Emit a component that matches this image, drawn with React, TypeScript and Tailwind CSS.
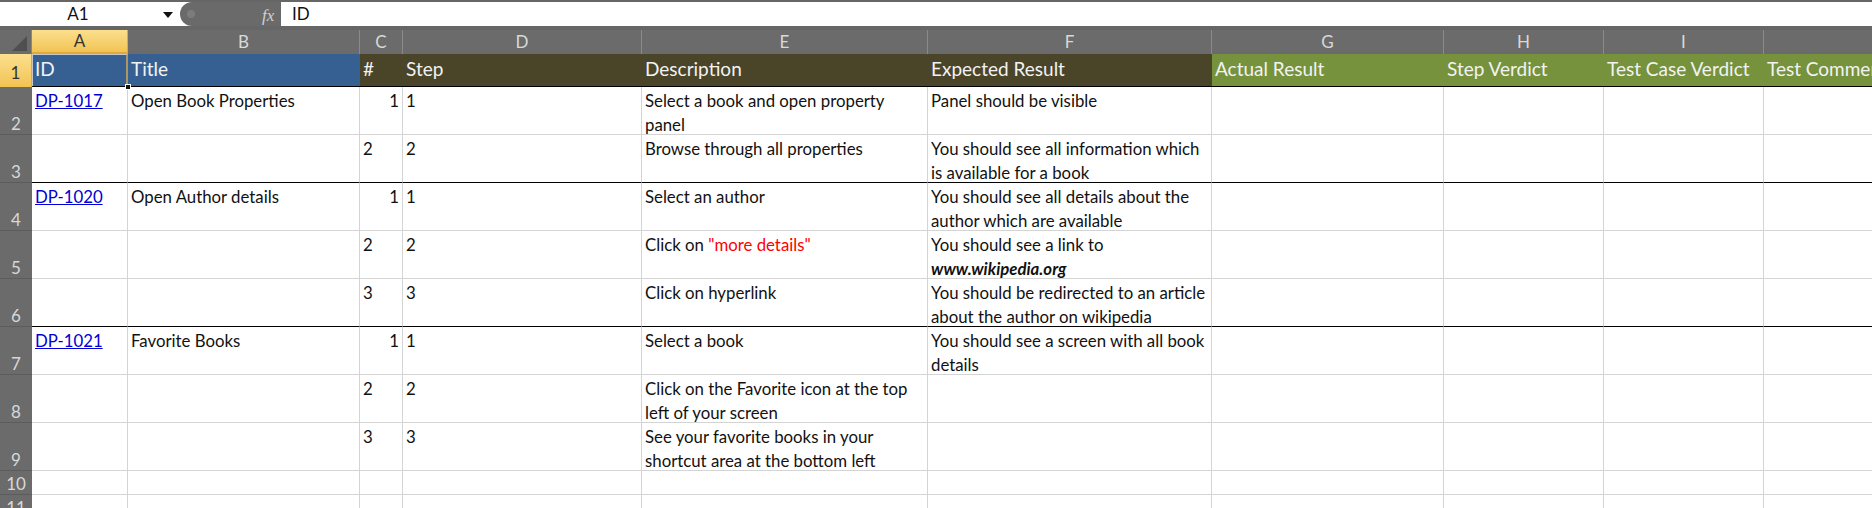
import React from 'react';

type Cell = React.ReactNode;

interface Row {
  a?: string;
  b?: string;
  c?: string;
  cNum?: boolean;
  d?: string;
  e?: Cell[];
  f?: Cell[];
  sep?: boolean;
  h: string;
}

const font = { fontFamily: 'Lato, "Liberation Sans", sans-serif' };

const rows: Row[] = [
  {
    a: 'DP-1017',
    b: 'Open Book Properties',
    c: '1',
    cNum: true,
    d: '1',
    e: ['Select a book and open property', 'panel'],
    f: ['Panel should be visible'],
    h: 'h-[48px]',
  },
  {
    c: '2',
    d: '2',
    e: ['Browse through all properties'],
    f: ['You should see all information which', 'is available for a book'],
    sep: true,
    h: 'h-[48px]',
  },
  {
    a: 'DP-1020',
    b: 'Open Author details',
    c: '1',
    cNum: true,
    d: '1',
    e: ['Select an author'],
    f: ['You should see all details about the', 'author which are available'],
    h: 'h-[48px]',
  },
  {
    c: '2',
    d: '2',
    e: [
      <>
        Click on <span className="text-[#ff0000]">"more details"</span>
      </>,
    ],
    f: ['You should see a link to', <span className="font-bold italic">www.wikipedia.org</span>],
    h: 'h-[48px]',
  },
  {
    c: '3',
    d: '3',
    e: ['Click on hyperlink'],
    f: ['You should be redirected to an article', 'about the author on wikipedia'],
    sep: true,
    h: 'h-[48px]',
  },
  {
    a: 'DP-1021',
    b: 'Favorite Books',
    c: '1',
    cNum: true,
    d: '1',
    e: ['Select a book'],
    f: ['You should see a screen with all book', 'details'],
    h: 'h-[48px]',
  },
  {
    c: '2',
    d: '2',
    e: ['Click on the Favorite icon at the top', 'left of your screen'],
    h: 'h-[48px]',
  },
  {
    c: '3',
    d: '3',
    e: ['See your favorite books in your', 'shortcut area at the bottom left'],
    h: 'h-[48px]',
  },
  { h: 'h-[24px]' },
  { h: 'h-[24px]' },
];

// J is wider than the window, so its letter sits off-screen like in Excel
const columns = [
  { key: 'A', w: 'w-[96px]' },
  { key: 'B', w: 'w-[232px]' },
  { key: 'C', w: 'w-[43px]' },
  { key: 'D', w: 'w-[239px]' },
  { key: 'E', w: 'w-[286px]' },
  { key: 'F', w: 'w-[284px]' },
  { key: 'G', w: 'w-[232px]' },
  { key: 'H', w: 'w-[160px]' },
  { key: 'I', w: 'w-[160px]' },
  { key: 'J', w: 'w-[500px]' },
];

const headers = [
  { text: 'ID', bg: 'bg-[#376092]' },
  { text: 'Title', bg: 'bg-[#376092]' },
  { text: '#', bg: 'bg-[#4a4429]' },
  { text: 'Step', bg: 'bg-[#4a4429]' },
  { text: 'Description', bg: 'bg-[#4a4429]' },
  { text: 'Expected Result', bg: 'bg-[#4a4429]' },
  { text: 'Actual Result', bg: 'bg-[#76923c]' },
  { text: 'Step Verdict', bg: 'bg-[#76923c]' },
  { text: 'Test Case Verdict', bg: 'bg-[#76923c]' },
  { text: 'Test Comments', bg: 'bg-[#76923c]' },
];

const Lines: React.FC<{ lines?: Cell[] }> = ({ lines }) => (
  <>
    {lines?.map((l, i) => (
      <div key={i} className="whitespace-nowrap">
        {l}
      </div>
    ))}
  </>
);

const FormulaBar: React.FC = () => (
  <div className="h-[30px] bg-[#666] pt-[2px] pb-[4px]">
    <div className="flex h-[24px] bg-white">
      <div className="relative w-[180px] flex items-center">
        <span className="w-[156px] text-center text-[17px] text-[#111]">A1</span>
        <svg className="absolute left-[163px] top-[10px]" width="10" height="6" viewBox="0 0 10 6">
          <polygon points="0,0 10,0 5,6" fill="#111" />
        </svg>
      </div>
      <div className="relative w-[101px] h-full bg-[#6a6a6a] rounded-l-full">
        <span className="absolute left-[7px] top-[8px] w-[8px] h-[8px] rounded-full bg-[#7c7c7c]" />
        <span
          className="absolute left-[82px] top-[1px] text-[17px] italic text-[#d2d2d2]"
          style={{ fontFamily: '"Liberation Serif", serif' }}
        >
          fx
        </span>
      </div>
      <div className="flex-1 flex items-center pl-[11px] text-[17px] text-[#111]">ID</div>
    </div>
  </div>
);

const App: React.FC = () => {
  return (
    <div className="w-[1872px] h-[508px] overflow-hidden bg-white" style={font}>
      <FormulaBar />

      {/* Column headers */}
      <div className="flex h-[24px]">
        <div className="relative w-[32px] shrink-0 bg-[#6b6b6b] border-r border-[#888]">
          <svg className="absolute right-[4px] bottom-[3px]" width="15" height="15" viewBox="0 0 15 15">
            <polygon points="15,0 15,15 0,15" fill="#4f4f4f" />
          </svg>
        </div>
        {columns.map((c, i) => (
          <div
            key={c.key}
            className={`${c.w} shrink-0 flex items-center justify-center text-[17px] border-r ${
              i === 0
                ? 'bg-gradient-to-b from-[#fbe08d] to-[#f2c352] text-[#333] border-[#e0a93c] border-b-2'
                : 'bg-[#6b6b6b] text-[#d9d9d9] border-[#8a8a8a]'
            }`}
          >
            {c.key}
          </div>
        ))}
      </div>

      {/* Row 1 - table header */}
      <div className="flex h-[33px]">
        <div className="w-[32px] shrink-0 flex items-end justify-center pb-[2px] text-[17px] text-[#333] bg-gradient-to-b from-[#fbe08d] to-[#f2c352] border-r border-[#e0a93c]">
          1
        </div>
        {columns.map((c, i) => (
          <div
            key={c.key}
            className={`${c.w} shrink-0 relative flex items-end pb-[3px] pl-[3px] text-[19px] text-[#f2f2f2] whitespace-nowrap border-b border-black ${headers[i].bg}`}
          >
            {headers[i].text}
            {i === 0 && (
              <>
                <span className="absolute inset-0 border-l border-t border-[#c8c8c8] border-r-2 border-r-[#ad9566] border-b-0" />
                <span className="absolute right-[-3px] bottom-[-4px] w-[6px] h-[6px] bg-[#111] border border-white z-10" />
              </>
            )}
          </div>
        ))}
      </div>

      {/* Body rows */}
      {rows.map((r, ri) => {
        const border = r.sep ? 'border-b border-b-black' : 'border-b border-b-[#d4d4d4]';
        const cell = `shrink-0 border-r border-r-[#d4d4d4] ${border} px-[3px] pt-[2px] text-[16.8px] leading-6 text-[#111]`;
        return (
          <div key={ri} className={`flex ${r.h}`}>
            <div className="w-[32px] shrink-0 flex items-end justify-center pb-0 text-[17px] leading-5 text-[#d8d8d8] bg-[#6b6b6b] border-b border-[#5c5c5c]">
              {ri + 2}
            </div>
            <div className={`w-[96px] ${cell}`}>
              {r.a && <span className="text-[#0000d4] underline">{r.a}</span>}
            </div>
            <div className={`w-[232px] ${cell} whitespace-nowrap`}>{r.b}</div>
            <div className={`w-[43px] ${cell} ${r.cNum ? 'text-right' : ''}`}>{r.c}</div>
            <div className={`w-[239px] ${cell}`}>{r.d}</div>
            <div className={`w-[286px] ${cell}`}>
              <Lines lines={r.e} />
            </div>
            <div className={`w-[284px] ${cell}`}>
              <Lines lines={r.f} />
            </div>
            <div className={`w-[232px] ${cell}`} />
            <div className={`w-[160px] ${cell}`} />
            <div className={`w-[160px] ${cell}`} />
            <div className={`w-[500px] ${cell}`} />
          </div>
        );
      })}
    </div>
  );
};

export default App;
